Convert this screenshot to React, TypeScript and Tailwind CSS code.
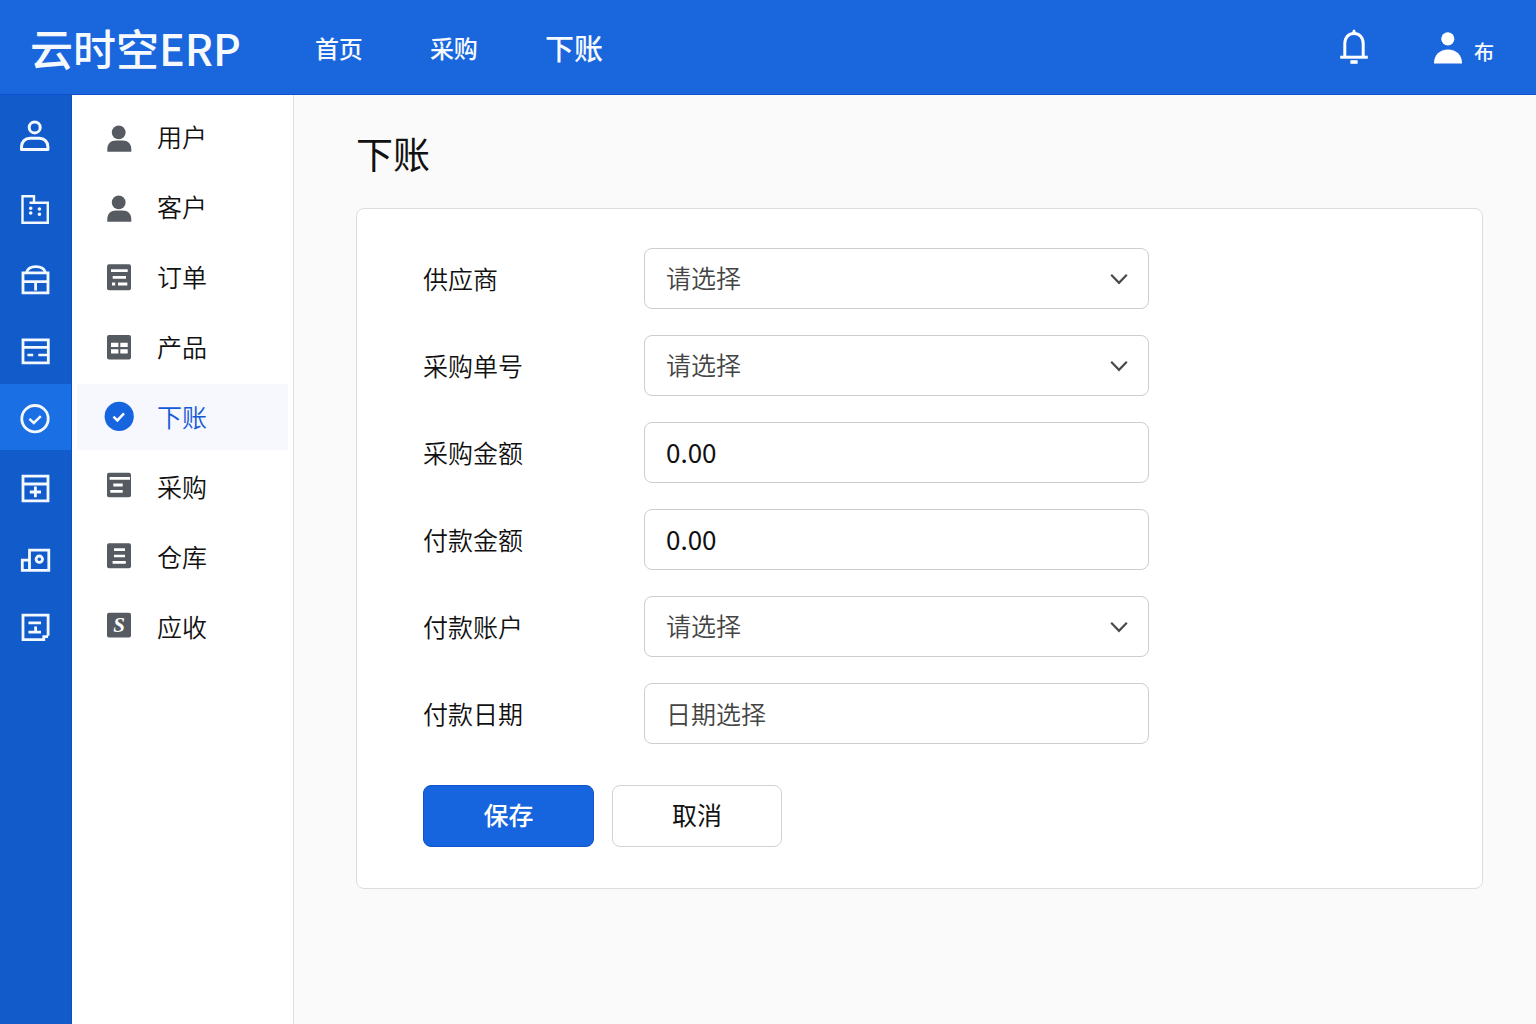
import { useState, ReactNode } from 'react';

// ── Icons (40x40 canvas) ─────────────────────────────────────────────────────

function RailIcon({ children }: { children: ReactNode }) {
  return (
    <svg className="w-10 h-10" viewBox="0 0 40 40" fill="none" stroke="#f4f9ff" strokeWidth="2.8" aria-hidden="true">
      {children}
    </svg>
  );
}

function MenuIcon({ children }: { children: ReactNode }) {
  return (
    <svg className="w-10 h-10 shrink-0" viewBox="0 0 40 40" fill="none" aria-hidden="true">
      {children}
    </svg>
  );
}

const personIcon = (
  <MenuIcon>
    <circle cx="19.7" cy="15.4" r="6.9" fill="#565b62" />
    <path d="M8.3 34.7V32c0-4.9 3.6-8.4 8.6-8.4h6.8c5 0 8.6 3.5 8.6 8.4v2.7z" fill="#565b62" />
  </MenuIcon>
);

const railItems = [
  {
    label: '用户',
    icon: (
      <RailIcon>
        <circle cx="18.7" cy="10.4" r="5.5" strokeWidth="3" />
        <path d="M5.5 32.5V30c0-5.2 3.6-8.8 8.6-8.8h9.2c5 0 8.6 3.6 8.6 8.8v2.5z" strokeWidth="3" strokeLinejoin="round" />
      </RailIcon>
    ),
  },
  {
    label: '公司',
    icon: (
      <RailIcon>
        <path d="M13.5 15.8H31.8V35.8H6.5V9.2H18v6.6" strokeWidth="2.4" />
        <path d="M14.7 21.3h.01M14.7 26h.01M23.4 22h.01M23.4 27.3h.01" strokeWidth="3.6" strokeLinecap="round" />
      </RailIcon>
    ),
  },
  {
    label: '商品',
    icon: (
      <RailIcon>
        <path d="M7 15.8h25v20H7zM7 24.7h25M19.6 25v8.5" />
        <path d="M10.5 15.5C11.5 11.5 15 9.6 19.8 9.6s8.6 1.9 9.6 5.9" />
      </RailIcon>
    ),
  },
  {
    label: '单据',
    icon: (
      <RailIcon>
        <path d="M7 12.9h25.3v23H7zM7 20.4h25.3" />
        <path d="M11.4 28h5.8M22.3 28h9" strokeWidth="2.3" />
      </RailIcon>
    ),
  },
  {
    label: '下账',
    icon: (
      <RailIcon>
        <circle cx="19" cy="21.7" r="13.2" />
        <path d="M13.4 21.8l4.4 4.2 7-6.8" strokeWidth="2.5" />
      </RailIcon>
    ),
  },
  {
    label: '新增',
    icon: (
      <RailIcon>
        <path d="M7 9.2h25v24.6H7zM7 17h25M13.8 25h11.2M19.4 19.6v10.6" />
      </RailIcon>
    ),
  },
  {
    label: '资金',
    icon: (
      <RailIcon>
        <path d="M13.5 13.2h19.3v20.2H13.5zM13.5 23.2H6.3v10.2h7.2" />
        <circle cx="23.3" cy="22.2" r="3.2" />
      </RailIcon>
    ),
  },
  {
    label: '报表',
    icon: (
      <RailIcon>
        <path d="M32.1 28.8V8.2H7v24.4h20.8v-3h4.3M12.4 15.8h12.6M12.4 25.2h12.6M19.6 19.4v5.8" />
      </RailIcon>
    ),
  },
];

const menuItems = [
  { label: '用户', icon: personIcon },
  { label: '客户', icon: personIcon },
  {
    label: '订单',
    icon: (
      <MenuIcon>
        <rect x="8" y="7.2" width="24" height="26" rx="2" fill="#565b62" />
        <path d="M12 13.7h16.7M13.7 20.3H27M19 27h9.3M13 27h3.2" stroke="#fff" strokeWidth="2.8" />
      </MenuIcon>
    ),
  },
  {
    label: '产品',
    icon: (
      <MenuIcon>
        <rect x="8" y="8" width="24" height="24.4" rx="2" fill="#565b62" />
        <path d="M12 17.9h7.4M21.3 17.9h7.4M12 24.4h7.4M21.3 24.4h7.4" stroke="#fff" strokeWidth="4.2" />
      </MenuIcon>
    ),
  },
  {
    label: '下账',
    icon: (
      <MenuIcon>
        <circle cx="20.2" cy="19.4" r="14.6" fill="#1765de" />
        <path d="M14.4 19.6l4 3.8 6.6-7" stroke="#fff" strokeWidth="2.5" />
      </MenuIcon>
    ),
  },
  {
    label: '采购',
    icon: (
      <MenuIcon>
        <rect x="8" y="5.8" width="24" height="24.4" rx="2" fill="#565b62" />
        <path d="M10.6 11.4h20.4M14.3 18h9.4M11.3 24.3h12.4" stroke="#fff" strokeWidth="2.8" />
      </MenuIcon>
    ),
  },
  {
    label: '仓库',
    icon: (
      <MenuIcon>
        <rect x="8" y="6.2" width="24" height="25" rx="2" fill="#565b62" />
        <path d="M15 12.6h11M15 19h11M13.6 25.4h13.2" stroke="#fff" strokeWidth="2.6" />
      </MenuIcon>
    ),
  },
  {
    label: '应收',
    icon: (
      <MenuIcon>
        <rect x="8" y="5.8" width="24" height="24.6" rx="2" fill="#565b62" />
        <text x="20" y="24.8" textAnchor="middle" fill="#fff" fontSize="21" fontWeight="700" fontStyle="italic" fontFamily="Liberation Serif, serif">
          S
        </text>
      </MenuIcon>
    ),
  },
];

// ── Form controls ────────────────────────────────────────────────────────────

const controlClass =
  'w-full h-[61px] rounded-lg border border-[#cccdcf] bg-white px-[21px] pb-0.5 outline-none focus:border-[#1765de]';

function Field({ id, label, children }: { id: string; label: string; children: ReactNode }) {
  return (
    <div className="flex items-center">
      <label htmlFor={id} className="w-[221px] shrink-0 pb-0.5 text-[25px] leading-9 font-[350]">{label}</label>
      <div className="relative w-full max-w-[505px]">{children}</div>
    </div>
  );
}

function SelectField({ id, label }: { id: string; label: string }) {
  return (
    <Field id={id} label={label}>
      <select id={id} className={`${controlClass} appearance-none text-[25px] font-[350] text-[#444]`}>
        <option>请选择</option>
      </select>
      <svg className="absolute right-5 top-5 w-5 h-5 pointer-events-none" viewBox="0 0 20 20" fill="none" stroke="#4a4a4a" strokeWidth="2.2" aria-hidden="true">
        <path d="M2.2 6.8L10 14.8l7.8-8" />
      </svg>
    </Field>
  );
}

function AmountField({ id, label }: { id: string; label: string }) {
  const [value, setValue] = useState('0.00');
  return (
    <Field id={id} label={label}>
      <input id={id} inputMode="decimal" value={value} onChange={(e) => setValue(e.target.value)} className={`${controlClass} text-[26px] text-[#111]`} />
    </Field>
  );
}

export default function App() {
  const [active, setActive] = useState(4);

  return (
    <div className="min-h-screen flex flex-col bg-[#fafafa] text-[#111] font-['Noto_Sans_CJK_SC',sans-serif]">

      {/* ── Top bar ──────────────────────────────────────────────────────── */}
      <header className="h-[95px] shrink-0 flex items-center bg-[#1966dd] border-b border-[#0f50cc] pl-[30px] pr-[42px] text-[#f6faff]">
        <a href="#" className="text-[43px] leading-none font-medium whitespace-nowrap">云时空ERP</a>
        <nav className="ml-[74px] flex items-center gap-[67px] pt-0.5 font-medium">
          <a href="#" className="text-2xl">首页</a>
          <a href="#" className="text-2xl">采购</a>
          <a href="#" className="text-[29px]" aria-current="page">下账</a>
        </nav>
        <div className="ml-auto flex items-center gap-16">
          <button type="button" aria-label="通知">
            <svg className="w-8 h-9" viewBox="0 0 32 36" fill="none" stroke="#fff" strokeWidth="3" aria-hidden="true">
              <path d="M6.8 27.4V14.6C6.8 8.4 10.6 4.4 16 4.4s9.2 4 9.2 10.2v12.8" />
              <path d="M2.2 28.2h27.6" />
              <path d="M14 4l1-3.2h2L18 4z" fill="#fff" stroke="none" />
              <path d="M12.4 31.2h7.2v3.6h-7.2z" fill="#fff" stroke="none" />
            </svg>
          </button>
          <button type="button" className="flex items-center gap-3 pt-0.5">
            <svg className="w-7 h-8" viewBox="0 0 28 32" fill="#fff" aria-hidden="true">
              <circle cx="13.8" cy="6.8" r="6.6" />
              <path d="M0 31.6v-1C0 23 5.8 17.4 14 17.4S28 23 28 30.6v1z" />
            </svg>
            <span className="pt-2 text-xl font-medium">布</span>
          </button>
        </div>
      </header>

      <div className="flex flex-1">

        {/* ── Icon rail ────────────────────────────────────────────────── */}
        <nav aria-label="模块" className="w-[72px] shrink-0 flex flex-col gap-1 pt-[9px] bg-[#125bca] border-r border-[#0d4ecb]">
          {railItems.map((item, i) => (
            <button
              key={item.label}
              type="button"
              aria-label={item.label}
              className={`h-[66px] flex items-center justify-center ${i === 4 ? 'bg-[#1b6fe4]' : ''}`}
            >
              {item.icon}
            </button>
          ))}
        </nav>

        {/* ── Side menu ────────────────────────────────────────────────── */}
        <nav aria-label="菜单" className="w-[222px] shrink-0 flex flex-col gap-1 pt-[9px] px-[5px] bg-white border-r border-[#dedfe1]">
          {menuItems.map((item, i) => (
            <a
              key={item.label}
              href="#"
              onClick={() => setActive(i)}
              className={`h-[66px] flex items-center gap-[18px] pl-[22px] text-[25px] font-[350] ${
                i === active ? 'bg-[#f6f8fd] text-[#1459d6]' : 'text-[#111]'
              }`}
            >
              {item.icon}
              <span className="pb-px">{item.label}</span>
            </a>
          ))}
        </nav>

        {/* ── Content ──────────────────────────────────────────────────── */}
        <main className="flex-1 min-w-0 pl-[62px] pr-[53px] pt-[30px] pb-8">
          <h1 className="text-[37px] leading-[56px]">下账</h1>

          <form
            className="mt-[27px] rounded-lg border border-[#dcdddf] bg-white px-[66px] pt-[39px] pb-[41px]"
            onSubmit={(e) => e.preventDefault()}
          >
            <div className="flex flex-col gap-[26px]">
              <SelectField id="supplier" label="供应商" />
              <SelectField id="order-no" label="采购单号" />
              <AmountField id="order-amount" label="采购金额" />
              <AmountField id="pay-amount" label="付款金额" />
              <SelectField id="account" label="付款账户" />
              <Field id="pay-date" label="付款日期">
                <input id="pay-date" placeholder="日期选择" className={`${controlClass} text-[25px] font-[350] placeholder:text-[#444]`} />
              </Field>
            </div>

            <div className="mt-[41px] flex gap-[18px]">
              <button type="submit" className="w-[171px] h-[62px] rounded-lg bg-[#1765de] border border-[#0f55cf] pb-0.5 text-[25px] font-medium text-white">
                保存
              </button>
              <button type="button" className="w-[170px] h-[62px] rounded-lg bg-white border border-[#d2d3d5] pb-0.5 text-[25px]">
                取消
              </button>
            </div>
          </form>
        </main>
      </div>
    </div>
  );
}
